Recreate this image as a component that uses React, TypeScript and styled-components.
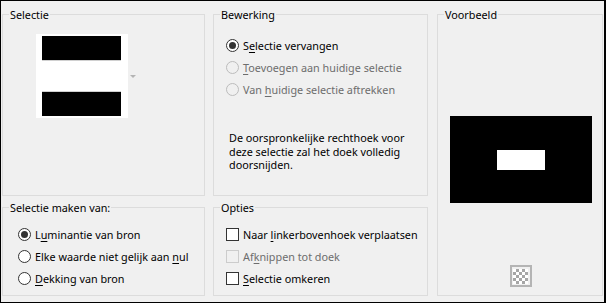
import React from 'react';
import styled, { createGlobalStyle } from 'styled-components';

const GlobalStyle = createGlobalStyle`
  html, body {
    margin: 0;
    padding: 0;
    background: #f0f0f0;
  }
  * {
    box-sizing: border-box;
  }
`;

const Dialog = styled.div`
  width: 606px;
  height: 303px;
  background: #f0f0f0;
  border-top: 1px solid #000;
  border-left: 1px solid #000;
  border-right: 2px solid #000;
  border-bottom: 1px solid #000;
  padding: 6px 0 6px 1px;
  display: grid;
  grid-template-columns: 203px 216px 166px;
  grid-template-rows: 189px 96px;
  column-gap: 8px;
  row-gap: 4px;
  font-family: 'Noto Sans', 'Open Sans', sans-serif;
  font-size: 10.8px;
  color: #000;
`;

const Group = styled.fieldset<{ $col: number; $row: string }>`
  margin: 0;
  padding: 0;
  min-width: 0;
  border: 1px solid #dcdcdc;
  grid-column: ${p => p.$col};
  grid-row: ${p => p.$row};
  margin-right: ${p => (p.$col === 2 ? 1 : 0)}px;
  display: flex;
  flex-direction: column;
`;

const Legend = styled.legend`
  padding: 0 1px;
  margin-left: 6px;
  line-height: 15px;
`;

const SelectionRow = styled.div`
  display: flex;
  align-items: center;
  margin: 12px 0 0 33px;
`;

const SelectionSwatch = styled.div`
  width: 92px;
  height: 84px;
  background: #fff;
  padding: 2px 7px 2px 6px;
  display: flex;
  flex-direction: column;
  justify-content: space-between;
`;

const Bar = styled.div<{ $top?: boolean }>`
  height: 25px;
  background: #000;
  ${p => (p.$top ? 'border-bottom: 1px solid #d0d0d0;' : 'border-top: 1px solid #d0d0d0;')}
  background-clip: padding-box;
`;

const DropArrow = styled.span`
  width: 0;
  height: 0;
  margin-left: 2px;
  border-left: 3px solid transparent;
  border-right: 3px solid transparent;
  border-top: 3px solid #b4b4b4;
`;

const OptionList = styled.div<{ $top: number; $left: number }>`
  display: flex;
  flex-direction: column;
  padding-top: ${p => p.$top}px;
  padding-left: ${p => p.$left}px;
`;

const Option = styled.label<{ $disabled?: boolean }>`
  height: 22px;
  display: flex;
  align-items: center;
  gap: 4px;
  color: ${p => (p.$disabled ? '#6d6d6d' : '#000')};
  white-space: nowrap;
  u {
    text-decoration-thickness: 1px;
    text-underline-offset: 2px;
  }
`;

const Radio = styled.span<{ $checked?: boolean; $disabled?: boolean }>`
  width: 13px;
  height: 13px;
  flex: none;
  border-radius: 50%;
  border: 1px solid ${p => (p.$disabled ? '#bcbcbc' : '#333')};
  background: ${p => (p.$disabled ? '#f0f0f0' : '#fff')};
  display: flex;
  align-items: center;
  justify-content: center;
  &::after {
    content: '';
    width: 7px;
    height: 7px;
    border-radius: 50%;
    background: ${p => (p.$checked ? '#333' : 'transparent')};
  }
`;

const Checkbox = styled.span<{ $disabled?: boolean }>`
  width: 13px;
  height: 13px;
  flex: none;
  border: 1px solid ${p => (p.$disabled ? '#cccccc' : '#333')};
  background: ${p => (p.$disabled ? '#f0f0f0' : '#fff')};
`;

const Note = styled.p`
  margin: 31px 0 0 15px;
  line-height: 13.5px;
`;

const PreviewBody = styled.div`
  display: flex;
  flex-direction: column;
  align-items: center;
  padding-left: 1px;
`;

const PreviewCanvas = styled.div`
  margin-top: 94px;
  width: 142px;
  height: 87px;
  background: #000;
  display: flex;
  align-items: center;
  justify-content: center;
  padding-top: 1px;
`;

const PreviewHole = styled.div`
  width: 48px;
  height: 20px;
  background: #fff;
`;

const CheckerButton = styled.div`
  margin-top: 62px;
  width: 22px;
  height: 22px;
  border: 2px solid #b4b4b4;
  padding: 1.5px;
  background: #f0f0f0;
  &::after {
    content: '';
    display: block;
    width: 15px;
    height: 15px;
    background: repeating-conic-gradient(#a6a6a6 0% 25%, #ffffff 0% 50%) 0 0 / 6px 6px;
  }
`;

export default function App() {
  return (
    <>
      <GlobalStyle />
      <Dialog>
        <Group $col={1} $row="1">
          <Legend>Selectie</Legend>
          <SelectionRow>
            <SelectionSwatch>
              <Bar $top />
              <Bar />
            </SelectionSwatch>
            <DropArrow />
          </SelectionRow>
        </Group>

        <Group $col={2} $row="1">
          <Legend>Bewerking</Legend>
          <OptionList $top={12} $left={12}>
            <Option>
              <Radio $checked />
              <span>
                S<u>e</u>lectie vervangen
              </span>
            </Option>
            <Option $disabled>
              <Radio $disabled />
              <span>
                <u>T</u>oevoegen aan huidige selectie
              </span>
            </Option>
            <Option $disabled>
              <Radio $disabled />
              <span>
                Van <u>h</u>uidige selectie aftrekken
              </span>
            </Option>
          </OptionList>
          <Note>
            De oorspronkelijke rechthoek voor
            <br />
            deze selectie zal het doek volledig
            <br />
            doorsnijden.
          </Note>
        </Group>

        <Group $col={3} $row="1 / span 2">
          <Legend>Voorbeeld</Legend>
          <PreviewBody>
            <PreviewCanvas>
              <PreviewHole />
            </PreviewCanvas>
            <CheckerButton />
          </PreviewBody>
        </Group>

        <Group $col={1} $row="2">
          <Legend>Selectie maken van:</Legend>
          <OptionList $top={8} $left={15}>
            <Option>
              <Radio $checked />
              <span>
                L<u>u</u>minantie van bron
              </span>
            </Option>
            <Option>
              <Radio />
              <span>
                Elke waarde niet gelijk aan <u>n</u>ul
              </span>
            </Option>
            <Option>
              <Radio />
              <span>
                <u>D</u>ekking van bron
              </span>
            </Option>
          </OptionList>
        </Group>

        <Group $col={2} $row="2">
          <Legend>Opties</Legend>
          <OptionList $top={8} $left={12}>
            <Option>
              <Checkbox />
              <span>
                Naar <u>l</u>inkerbovenhoek verplaatsen
              </span>
            </Option>
            <Option $disabled>
              <Checkbox $disabled />
              <span>
                Af<u>k</u>nippen tot doek
              </span>
            </Option>
            <Option>
              <Checkbox />
              <span>
                <u>S</u>electie omkeren
              </span>
            </Option>
          </OptionList>
        </Group>
      </Dialog>
    </>
  );
}
